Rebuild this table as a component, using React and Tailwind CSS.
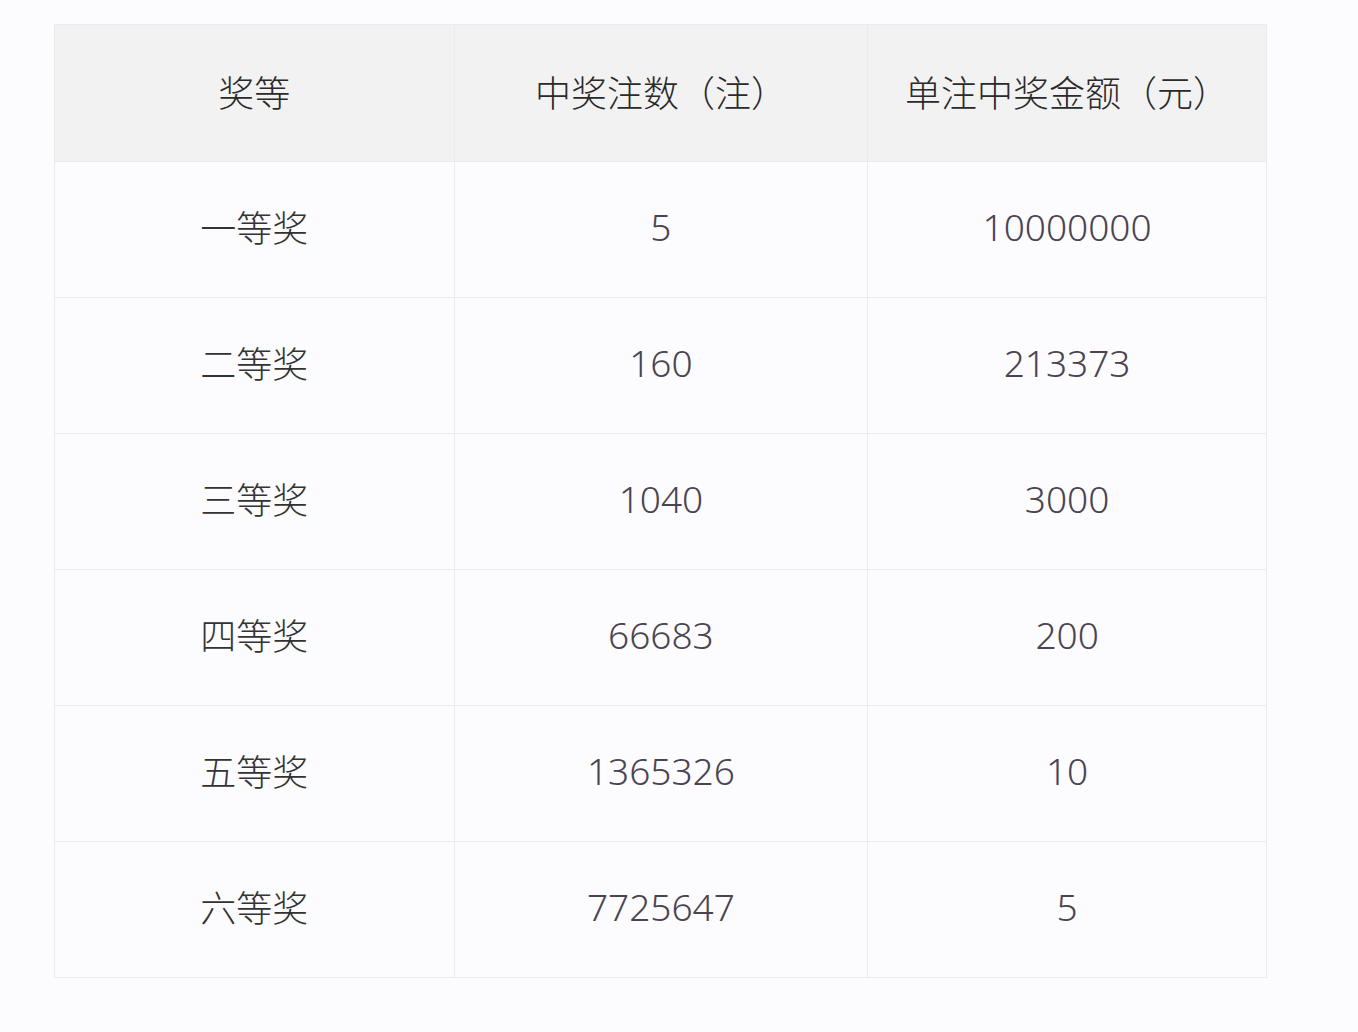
export default function App() {
  const rows = [
    ["一等奖", "5", "10000000"],
    ["二等奖", "160", "213373"],
    ["三等奖", "1040", "3000"],
    ["四等奖", "66683", "200"],
    ["五等奖", "1365326", "10"],
    ["六等奖", "7725647", "5"],
  ];
  const font = { fontFamily: '"Noto Sans CJK SC", "Noto Sans", sans-serif' };
  const numFont = { fontFamily: '"Noto Sans", "Noto Sans CJK SC", sans-serif' };
  return (
    <div className="w-[1358px] h-[1032px] bg-[#fcfbfd] pt-[24px] pl-[54px]" style={font}>
      <table className="border-collapse w-[1213px] text-[36px] font-light">
        <thead>
          <tr className="bg-[#f3f2f3] h-[137px]">
            <th className="w-[400px] border border-[#ebeaed] font-light text-[#2a2a2a] text-center pb-[4px]">奖等</th>
            <th className="w-[414px] border border-[#ebeaed] font-light text-[#2a2a2a] text-center pb-[4px]">中奖注数（注）</th>
            <th className="w-[399px] border border-[#ebeaed] font-light text-[#2a2a2a] text-center pb-[4px]">单注中奖金额（元）</th>
          </tr>
        </thead>
        <tbody>
          {rows.map((r) => (
            <tr key={r[0]} className="h-[136px]">
              <td className="border border-[#ebeaed] text-center text-[#333333] pb-[8px]">{r[0]}</td>
              <td className="border border-[#ebeaed] text-center text-[#4a4452] pb-[5px] text-[37px]" style={numFont}>{r[1]}</td>
              <td className="border border-[#ebeaed] text-center text-[#4a4452] pb-[5px] text-[37px]" style={numFont}>{r[2]}</td>
            </tr>
          ))}
        </tbody>
      </table>
    </div>
  );
}
